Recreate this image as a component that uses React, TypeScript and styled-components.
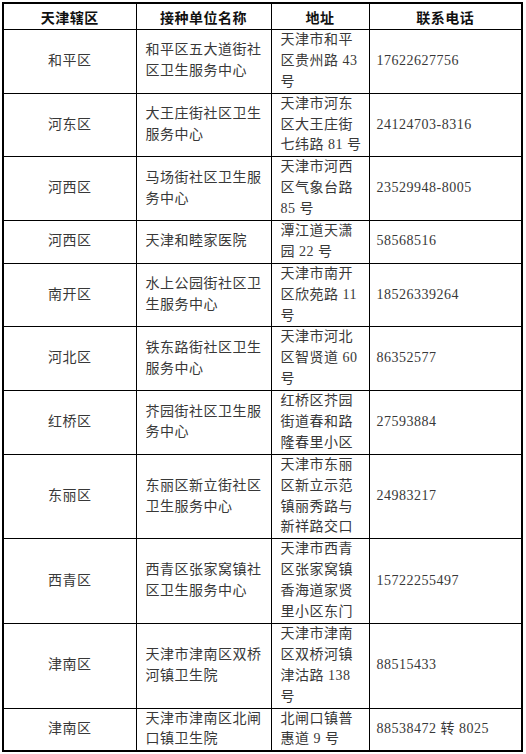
import styled, { createGlobalStyle } from 'styled-components';

type Row = {
  district: string;
  unit: string[];
  address: string[];
  phone: string;
};

const rows: Row[] = [
  { district: '和平区', unit: ['和平区五大道街社', '区卫生服务中心'], address: ['天津市和平', '区贵州路 43', '号'], phone: '17622627756' },
  { district: '河东区', unit: ['大王庄街社区卫生', '服务中心'], address: ['天津市河东', '区大王庄街', '七纬路 81 号'], phone: '24124703-8316' },
  { district: '河西区', unit: ['马场街社区卫生服', '务中心'], address: ['天津市河西', '区气象台路', '85 号'], phone: '23529948-8005' },
  { district: '河西区', unit: ['天津和睦家医院'], address: ['潭江道天潇', '园 22 号'], phone: '58568516' },
  { district: '南开区', unit: ['水上公园街社区卫', '生服务中心'], address: ['天津市南开', '区欣苑路 11', '号'], phone: '18526339264' },
  { district: '河北区', unit: ['铁东路街社区卫生', '服务中心'], address: ['天津市河北', '区智贤道 60', '号'], phone: '86352577' },
  { district: '红桥区', unit: ['芥园街社区卫生服', '务中心'], address: ['红桥区芥园', '街道春和路', '隆春里小区'], phone: '27593884' },
  { district: '东丽区', unit: ['东丽区新立街社区', '卫生服务中心'], address: ['天津市东丽', '区新立示范', '镇丽秀路与', '新祥路交口'], phone: '24983217' },
  { district: '西青区', unit: ['西青区张家窝镇社', '区卫生服务中心'], address: ['天津市西青', '区张家窝镇', '香海道家贤', '里小区东门'], phone: '15722255497' },
  { district: '津南区', unit: ['天津市津南区双桥', '河镇卫生院'], address: ['天津市津南', '区双桥河镇', '津沽路 138', '号'], phone: '88515433' },
  { district: '津南区', unit: ['天津市津南区北闸', '口镇卫生院'], address: ['北闸口镇普', '惠道 9 号'], phone: '88538472 转 8025' },
];

const GlobalStyle = createGlobalStyle`
  html, body {
    margin: 0;
    padding: 0;
    background: #ffffff;
  }
`;

function Lines({ items }: { items: string[] }) {
  return (
    <>
      {items.map((line, i) => (
        <Line key={i}>{line}</Line>
      ))}
    </>
  );
}

export default function App() {
  return (
    <Page>
      <GlobalStyle />
      <Table>
        <colgroup>
          <col style={{ width: 133 }} />
          <col style={{ width: 135 }} />
          <col style={{ width: 98 }} />
          <col />
        </colgroup>
        <thead>
          <tr>
            <HeadCell>天津辖区</HeadCell>
            <HeadCell>接种单位名称</HeadCell>
            <HeadCell>地址</HeadCell>
            <HeadCell>联系电话</HeadCell>
          </tr>
        </thead>
        <tbody>
          {rows.map((row, i) => (
            <tr key={i}>
              <Cell $align="center">
                <Line>{row.district}</Line>
              </Cell>
              <Cell $pad={9}>
                <Lines items={row.unit} />
              </Cell>
              <Cell $pad={9}>
                <Lines items={row.address} />
              </Cell>
              <Cell $pad={7}>
                <Line>{row.phone}</Line>
              </Cell>
            </tr>
          ))}
        </tbody>
      </Table>
    </Page>
  );
}

const Page = styled.div`
  padding: 2px 3px 0 2px;
  width: 521px;
`;

const Table = styled.table`
  width: 521px;
  table-layout: fixed;
  border-collapse: collapse;
  border: 2px solid #000;
  font-family: 'Liberation Serif', 'Noto Sans CJK SC', serif;
  font-size: 14px;
  color: #383838;
`;

const HeadCell = styled.th`
  height: 25px;
  padding: 0;
  border: 1px solid #000;
  font-family: 'Noto Sans CJK SC', sans-serif;
  font-weight: 700;
  font-size: 14px;
  letter-spacing: 0.5px;
  line-height: 20px;
  color: #111;
  text-align: center;
  vertical-align: middle;
`;

const Cell = styled.td<{ $align?: 'left' | 'center'; $pad?: number }>`
  padding: 0 0 0 ${(p) => (p.$align === 'center' ? 0 : p.$pad ?? 8)}px;
  border: 1px solid #000;
  letter-spacing: 0.5px;
  white-space: nowrap;
  text-align: ${(p) => p.$align ?? 'left'};
  vertical-align: middle;
`;

const Line = styled.div`
  height: 20.9px;
  line-height: 20.9px;
  overflow: visible;
`;
